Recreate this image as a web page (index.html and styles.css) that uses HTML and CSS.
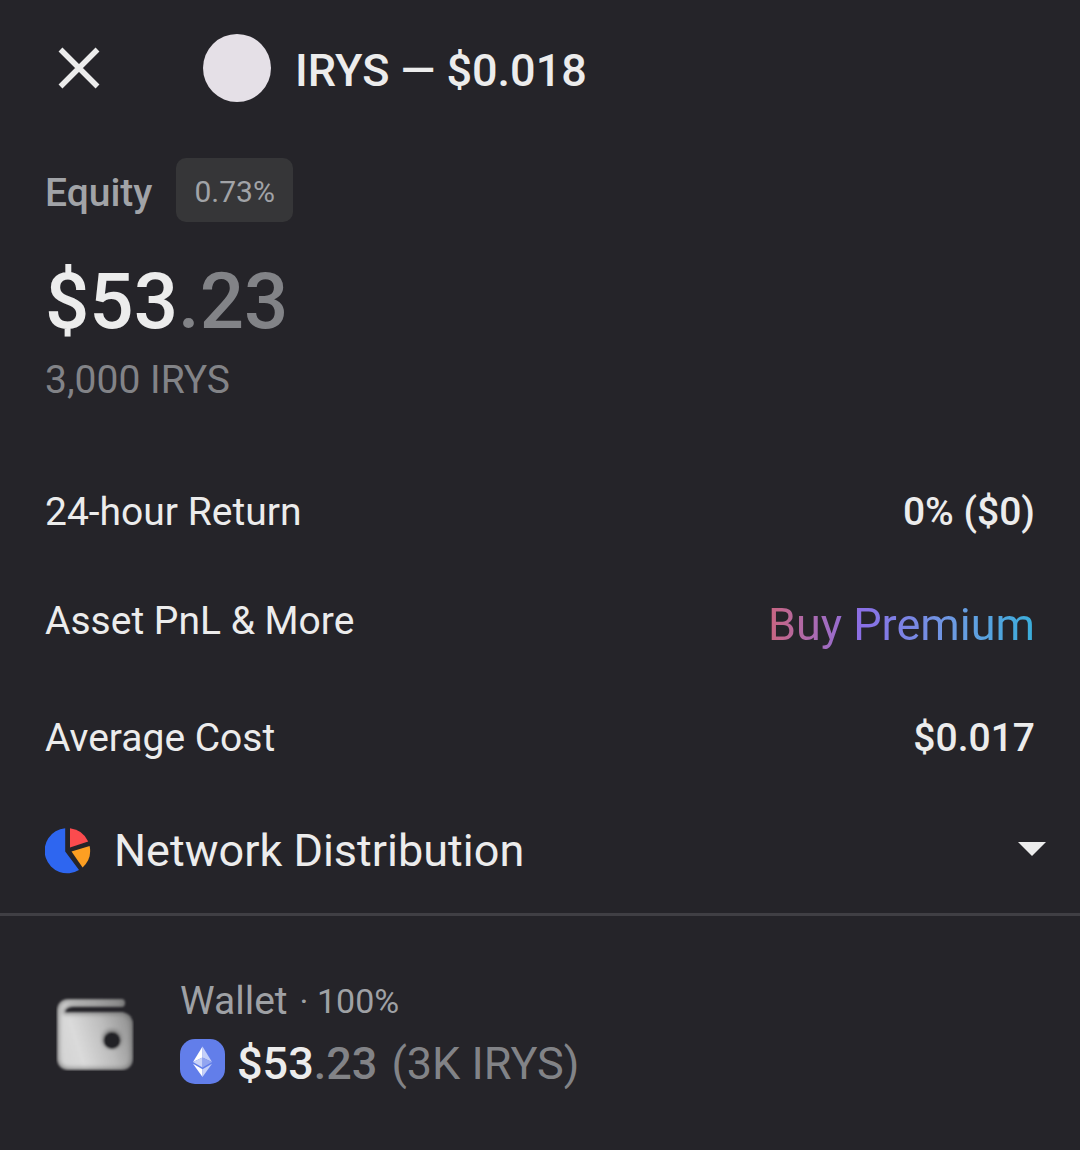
FILE: index.html
```
<!DOCTYPE html>
<html lang="en">
<head>
    <meta charset="UTF-8">
    <meta name="viewport" content="width=device-width, initial-scale=1.0">
    <title>IRYS</title>
    <link rel="stylesheet" href="styles.css">
</head>
<body>
    <header class="header">
        <button class="close" type="button" aria-label="Close">
            <svg width="44" height="44" viewBox="0 0 44 44"><path d="M3.5 3.5l37 37M40.5 3.5l-37 37" stroke="#ececec" stroke-width="5.5" fill="none"/></svg>
        </button>
        <span class="coin"></span>
        <h1 class="title">IRYS — $0.018</h1>
    </header>

    <main>
        <section class="equity">
            <div class="equity-head">
                <h2 class="equity-label">Equity</h2>
                <span class="badge">0.73%</span>
            </div>
            <p class="equity-value">$53<span class="cents">.23</span></p>
            <p class="equity-amount">3,000 IRYS</p>
        </section>

        <dl class="stats">
            <div class="row">
                <dt>24-hour Return</dt>
                <dd>0% ($0)</dd>
            </div>
            <div class="row row-premium">
                <dt>Asset PnL &amp; More</dt>
                <dd><a class="premium" href="#">Buy Premium</a></dd>
            </div>
            <div class="row">
                <dt>Average Cost</dt>
                <dd>$0.017</dd>
            </div>
        </dl>

        <button class="network" type="button" aria-expanded="true">
            <svg width="46" height="46" viewBox="0 0 46 46">
                <path d="M20.2.2A22.6 22.6 0 1 0 34 42L20.2 23.5z" fill="#2e66f0"/>
                <path d="M25 .2A22.6 22.6 0 0 1 43.2 13.6L25 19.6z" fill="#fb4b4e"/>
                <path d="M44.6 18A22.6 22.6 0 0 1 37.6 39.4L26.5 23.6z" fill="#fd9f22"/>
            </svg>
            <span class="network-title">Network Distribution</span>
            <svg class="caret" width="28" height="18" viewBox="0 0 28 18"><path d="M0 0h28L14 14z" fill="#ececec"/></svg>
        </button>

        <section class="wallet">
            <svg class="wallet-icon" width="78" height="74" viewBox="0 0 78 74">
                <defs>
                    <linearGradient id="leather" x1="0" y1="0.6" x2="1" y2="0.3">
                        <stop offset="0" stop-color="#d4d4d4"/>
                        <stop offset="0.25" stop-color="#dadada"/>
                        <stop offset="0.6" stop-color="#bdbdbd"/>
                        <stop offset="1" stop-color="#8c8c8c"/>
                    </linearGradient>
                    <filter id="soft" x="-10%" y="-10%" width="120%" height="120%">
                        <feGaussianBlur stdDeviation="0.8"/>
                    </filter>
                    <filter id="shade" x="-10%" y="-10%" width="120%" height="120%">
                        <feGaussianBlur stdDeviation="2"/>
                    </filter>
                    <clipPath id="shape">
                        <path d="M14 2h51a3.500 3.500 0 0 1 0 8H17q-6 0-8 5h57q11 2 11 13v32q0 13-13 13H14Q1 73 1 60V15Q1 2 14 2z"/>
                    </clipPath>
                </defs>
                <g filter="url(#soft)">
                    <g clip-path="url(#shape)">
                        <rect width="78" height="74" fill="url(#leather)"/>
                        <path d="M14 2h51a3.500 3.500 0 0 1 0 8H17q-6 0-8 5h57q11 2 11 13v32q0 13-13 13H14Q1 73 1 60V15Q1 2 14 2z" fill="none" stroke="#666" stroke-width="3" filter="url(#shade)"/>
                    </g>
                    <circle cx="56" cy="42" r="9.500" fill="#777" filter="url(#shade)"/>
                    <circle cx="56" cy="43.500" r="8.500" fill="#222226"/>
                </g>
            </svg>
            <div class="wallet-info">
                <p class="wallet-name">Wallet <span class="share">· 100%</span></p>
                <div class="wallet-balance">
                    <svg width="45" height="46" viewBox="0 -1 45 46">
                        <rect width="45" height="45" rx="15" fill="#627eea"/>
                        <path d="M22.500 7.500v11L13 22.900z" fill="#fff"/>
                        <path d="M22.500 7.500v11l9.500 4.400z" fill="#c5d0f8"/>
                        <path d="M22.500 18.500v10L13 22.900z" fill="#c9d3f8"/>
                        <path d="M22.500 18.500v10l9.500-5.600z" fill="#92a5f0"/>
                        <path d="M22.500 30.300V38L13 24.700z" fill="#fff"/>
                        <path d="M22.500 30.300V38L32 24.700z" fill="#c5d0f8"/>
                    </svg>
                    <p class="balance">
                        <span>$53<span class="cents">.23</span></span>
                        <span class="tokens">(3K IRYS)</span>
                    </p>
                </div>
            </div>
        </section>
    </main>
</body>
</html>
```
FILE: styles.css
```
* {
    box-sizing: border-box;
}

body {
    margin: 0;
    background: #252429;
    color: #ececec;
    font-family: Roboto, "Liberation Sans", sans-serif;
    font-size: 39px;
    line-height: 46px;
}

h1, h2, p, dl, dd {
    margin: 0;
    font-weight: 400;
}

button {
    border: none;
    background: none;
    color: inherit;
    font: inherit;
    cursor: pointer;
}

svg {
    display: block;
    flex-shrink: 0;
}

.header {
    display: flex;
    align-items: center;
    height: 136px;
    padding: 0 45px;
}

.close {
    margin-right: 90px;
    padding: 12px;
}

.coin {
    flex-shrink: 0;
    width: 68px;
    height: 68px;
    border-radius: 50%;
    background: #e5e0e7;
}

.title {
    margin-left: 24px;
    padding-top: 6px;
    font-size: 45px;
    font-weight: 500;
    line-height: 52px;
}

.equity {
    padding: 22px 45px 52px;
}

.equity-head {
    display: flex;
    align-items: center;
    gap: 24px;
    margin-bottom: 34px;
    color: #a1a3a7;
}

.equity-label {
    padding-top: 6px;
    font-size: 39px;
    font-weight: 500;
}

.badge {
    padding: 12px 18px 8px;
    border-radius: 10px;
    background: #363638;
    font-size: 30px;
    line-height: 44px;
}

.equity-value {
    margin-bottom: 9px;
    font-size: 78px;
    font-weight: 500;
    line-height: 92px;
}

.cents,
.tokens,
.equity-amount {
    color: #828387;
}

.row {
    display: flex;
    align-items: center;
    justify-content: space-between;
    height: 113px;
    padding: 0 45px;
}

.row dd {
    font-weight: 500;
}

.row-premium dt {
    padding-bottom: 8px;
}

.premium {
    background: linear-gradient(90deg, #c9657f 0%, #8a6fe6 35%, #6c9be2 70%, #3aaedb 100%);
    background-clip: text;
    -webkit-background-clip: text;
    color: transparent;
    font-size: 45px;
    font-weight: 400;
    line-height: 52px;
    text-decoration: none;
}

.network {
    display: flex;
    align-items: center;
    width: 100%;
    padding: 31px 34px 36px 45px;
    border-bottom: 3px solid #403f44;
    font-size: 45px;
    line-height: 52px;
}

.network-title {
    margin-left: 23px;
}

.caret {
    margin-left: auto;
}

.wallet {
    display: flex;
    align-items: center;
    gap: 46px;
    padding: 62px 45px 62px 56px;
}

.wallet-name {
    display: flex;
    align-items: center;
    gap: 12px;
    margin-bottom: 14px;
    color: #9fa1a5;
}

.share {
    font-size: 34px;
}

.wallet-balance {
    display: flex;
    align-items: flex-start;
    gap: 12px;
}

.balance {
    display: flex;
    gap: 14px;
    font-size: 45px;
    font-weight: 500;
    line-height: 52px;
}

.tokens {
    font-weight: 400;
}
```
